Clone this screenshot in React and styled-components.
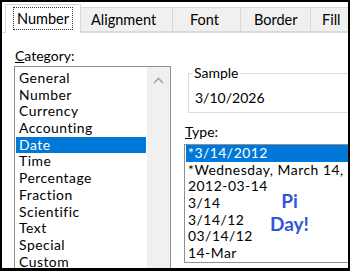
import React from "react";
import styled, { createGlobalStyle } from "styled-components";

const Global = createGlobalStyle`
  html, body { margin: 0; padding: 0; background: #fff; }
  body { font-family: Lato, "Open Sans", sans-serif; }
`;

const Frame = styled.div`
  width: 350px;
  height: 271px;
  box-sizing: border-box;
  border: 2px solid #000;
  border-bottom-width: 3px;
  background: #fff;
  overflow: hidden;
  position: relative;
  font-size: 14px;
  color: #000;
`;

const TabStrip = styled.div`
  display: flex;
  align-items: flex-end;
  height: 31px;
  padding-left: 3px;
  border-bottom: 1px solid #d9d9d9;
  box-sizing: border-box;
  font-size: 14.5px;
`;

const Tab = styled.div`
  flex: none;
  width: ${(p) => p.$w}px;
  box-sizing: border-box;
  height: ${(p) => (p.$active ? 29 : 25)}px;
  margin-bottom: ${(p) => (p.$active ? -1 : 0)}px;
  background: ${(p) => (p.$active ? "#fff" : "#f0f0f0")};
  border: 1px solid #d9d9d9;
  border-bottom: ${(p) => (p.$active ? "none" : "1px solid #d9d9d9")};
  border-left: ${(p) => (p.$first || p.$active ? "1px solid #d9d9d9" : "none")};
  display: flex;
  align-items: center;
  justify-content: ${(p) => (p.$active ? "center" : "flex-start")};
  padding-left: ${(p) => (p.$active ? 0 : p.$pad)}px;
  padding-bottom: ${(p) => (p.$active ? 2 : 0)}px;
  white-space: nowrap;
  overflow: hidden;
  z-index: ${(p) => (p.$active ? 1 : 0)};
`;

const FocusLabel = styled.span`
  outline: 1px dotted #333;
  outline-offset: 0;
  padding: 1px 3px;
  line-height: 19px;
`;

const Body = styled.div`
  display: flex;
  padding-left: 12px;
  gap: 13px;
`;

const LeftCol = styled.div`
  flex: none;
  width: 157px;
  display: flex;
  flex-direction: column;
`;

const Label = styled.div`
  line-height: 16px;
  margin-left: ${(p) => p.$ml || 0}px;
  margin-top: ${(p) => p.$mt || 0}px;
  margin-bottom: ${(p) => p.$mb || 0}px;
`;

const ListBox = styled.div`
  box-sizing: border-box;
  border: 1px solid #8c8f96;
  display: flex;
  height: ${(p) => p.$h}px;
  padding-top: ${(p) => p.$pt || 0}px;
  position: relative;
  font-size: 13.9px;
`;

const Items = styled.div`
  flex: 1;
  min-width: 0;
  display: flex;
  flex-direction: column;
`;

const Item = styled.div`
  height: 16.7px;
  line-height: 16.7px;
  margin: 0 1px;
  padding-left: ${(p) => p.$pl || 3}px;
  white-space: nowrap;
  letter-spacing: 0.5px;
  background: ${(p) => (p.$sel ? "#0078d7" : "transparent")};
  color: ${(p) => (p.$sel ? "#fff" : "#000")};
`;

const ScrollTrack = styled.div`
  flex: none;
  width: 23px;
  align-self: stretch;
  margin-top: -3px;
  background: #f0f0f0;
  display: flex;
  justify-content: center;
  padding-top: 10px;
  box-sizing: border-box;
`;

const RightCol = styled.div`
  flex: none;
  width: 200px;
  display: flex;
  flex-direction: column;
`;

const GroupBox = styled.fieldset`
  margin: 33px 0 0 4px;
  padding: 10px 0 0 6px;
  border: 1px solid #dcdcdc;
  border-right: none;
  height: 47px;
  box-sizing: border-box;
  min-width: 0;
`;

const Legend = styled.legend`
  padding: 0 1px;
  margin-left: -2px;
  line-height: 14px;
`;

const SampleValue = styled.div`
  line-height: 16px;
`;

const Annotation = styled.div`
  position: absolute;
  left: 85px;
  top: 44px;
  color: #3355dd;
  font-weight: 700;
  font-size: 19px;
  line-height: 23px;
  text-align: center;
`;

const categories = [
  "General", "Number", "Currency", "Accounting", "Date", "Time",
  "Percentage", "Fraction", "Scientific", "Text", "Special", "Custom",
];

const types = [
  "*3/14/2012", "*Wednesday, March 14,", "2012-03-14", "3/14",
  "3/14/12", "03/14/12", "14-Mar",
];

export default function App() {
  return (
    <>
      <Global />
      <Frame>
        <TabStrip>
          <Tab $w={76} $active $first>
            <FocusLabel>Number</FocusLabel>
          </Tab>
          <Tab $w={92} $pad={10}>Alignment</Tab>
          <Tab $w={68} $pad={17}>Font</Tab>
          <Tab $w={70} $pad={13}>Border</Tab>
          <Tab $w={60} $pad={11}>Fill</Tab>
        </TabStrip>
        <Body>
          <LeftCol>
            <Label $ml={1} $mt={15} $mb={2}>
              <u>C</u>ategory:
            </Label>
            <ListBox $h={220} $pt={3}>
              <Items>
                {categories.map((c) => (
                  <Item key={c} $sel={c === "Date"}>{c}</Item>
                ))}
              </Items>
              <ScrollTrack>
                <svg width="11" height="7" viewBox="0 0 11 7">
                  <path d="M1 6 L5.5 1.5 L10 6" fill="none" stroke="#a6a6a6" strokeWidth="1.6" />
                </svg>
              </ScrollTrack>
            </ListBox>
          </LeftCol>
          <RightCol>
            <GroupBox>
              <Legend>Sample</Legend>
              <SampleValue>3/10/2026</SampleValue>
            </GroupBox>
            <Label $ml={1} $mt={11} $mb={4}>
              <u>T</u>ype:
            </Label>
            <ListBox $h={119}>
              <Items>
                {types.map((t, i) => (
                  <Item key={t} $sel={i === 0} $pl={2}>{t}</Item>
                ))}
              </Items>
              <Annotation>Pi<br />Day!</Annotation>
            </ListBox>
          </RightCol>
        </Body>
      </Frame>
    </>
  );
}
